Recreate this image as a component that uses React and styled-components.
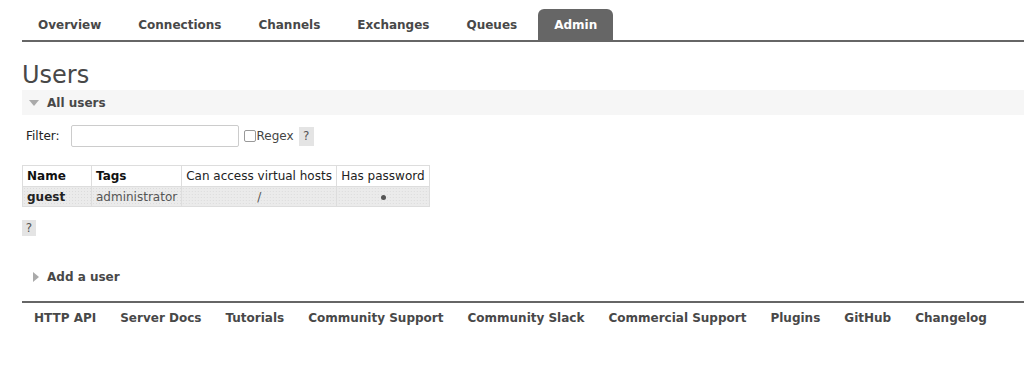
import React from 'react';
import styled, { createGlobalStyle } from 'styled-components';

const GlobalStyle = createGlobalStyle`
  html, body {
    margin: 0;
    padding: 0;
    background: #fff;
  }
  body {
    font-family: "DejaVu Sans", Verdana, sans-serif;
    font-size: 12px;
    color: #484848;
  }
`;

const tabs = ['Overview', 'Connections', 'Channels', 'Exchanges', 'Queues', 'Admin'];
const footerLinks = [
  'HTTP API',
  'Server Docs',
  'Tutorials',
  'Community Support',
  'Community Slack',
  'Commercial Support',
  'Plugins',
  'GitHub',
  'Changelog',
];

function App() {
  return (
    <>
      <GlobalStyle />
      <Page>
        <Tabs>
          {tabs.map(t => (
            <Tab key={t} $active={t === 'Admin'}>
              {t}
            </Tab>
          ))}
        </Tabs>

        <Title>Users</Title>

        <SectionHeader $open>
          <Arrow $open />
          All users
        </SectionHeader>

        <FilterRow>
          <label>Filter:</label>
          <FilterInput type="text" />
          <RegexLabel>
            <CheckBox />
            Regex
          </RegexLabel>
          <Help>?</Help>
        </FilterRow>

        <Table>
          <thead>
            <tr>
              <Th $w={69}>Name</Th>
              <Th $w={90}>Tags</Th>
              <ThPlain $w={155}>Can access virtual hosts</ThPlain>
              <ThPlain $w={93}>Has password</ThPlain>
            </tr>
          </thead>
          <tbody>
            <DataRow>
              <NameCell>guest</NameCell>
              <Td>administrator</Td>
              <Td $center>/</Td>
              <Td $center>
                <Dot />
              </Td>
            </DataRow>
          </tbody>
        </Table>

        <HelpBlock>?</HelpBlock>

        <SectionHeader $collapsed>
          <Arrow />
          Add a user
        </SectionHeader>

        <Footer>
          {footerLinks.map(l => (
            <FooterLink key={l}>{l}</FooterLink>
          ))}
        </Footer>
      </Page>
    </>
  );
}

export default App;

const Page = styled.div`
  padding-left: 22px;
  width: 1002px;
`;

const Tabs = styled.ul`
  display: flex;
  gap: 5px;
  list-style: none;
  margin: 0;
  padding: 9px 0 0;
  border-bottom: 2px solid #666;
  height: 31px;
`;

const Tab = styled.li`
  display: flex;
  align-items: center;
  padding: 0 16px;
  height: 32px;
  font-weight: bold;
  font-size: 12px;
  color: ${p => (p.$active ? '#fff' : '#484848')};
  background: ${p => (p.$active ? '#666' : 'transparent')};
  border-radius: 6px 6px 0 0;
`;

const Title = styled.h1`
  margin: 18px 0 0;
  font-size: 24px;
  font-weight: normal;
  line-height: 30px;
  color: #484848;
`;

const SectionHeader = styled.div`
  display: flex;
  align-items: center;
  height: 25px;
  margin-top: ${p => (p.$collapsed ? '28px' : '0')};
  padding-left: 7px;
  background: ${p => (p.$open ? '#f6f6f6' : 'transparent')};
  font-weight: bold;
  font-size: 12px;
  color: #484848;
`;

const Arrow = styled.span`
  display: inline-block;
  width: 0;
  height: 0;
  margin-right: 8px;
  ${p =>
    p.$open
      ? `
    border-left: 5px solid transparent;
    border-right: 5px solid transparent;
    border-top: 6px solid #aaa;
    margin-left: 0;
  `
      : `
    border-top: 5px solid transparent;
    border-bottom: 5px solid transparent;
    border-left: 6px solid #aaa;
    margin-left: 4px;
    margin-right: 8px;
  `}
`;

const FilterRow = styled.div`
  display: flex;
  align-items: center;
  margin-top: 10px;
  padding-left: 4px;
  font-size: 12px;
  color: #222;
  label {
    margin-right: 11px;
  }
`;

const FilterInput = styled.input`
  box-sizing: border-box;
  width: 168px;
  height: 22px;
  border: 1px solid #ccc;
  border-radius: 2px;
  margin: 0;
  padding: 2px 4px;
`;

const RegexLabel = styled.span`
  display: flex;
  align-items: center;
  margin-left: 5px;
  color: #444;
`;

const CheckBox = styled.span`
  box-sizing: border-box;
  width: 12px;
  height: 12px;
  border: 1px solid #999;
  border-radius: 2px;
  margin-right: 1px;
`;

const Help = styled.span`
  display: inline-flex;
  align-items: center;
  justify-content: center;
  width: 15px;
  height: 19px;
  margin-left: 5px;
  background: #e4e4e4;
  color: #555;
  font-size: 12px;
`;

const Table = styled.table`
  border-collapse: collapse;
  margin-top: 18px;
  font-size: 12px;
`;

const Th = styled.th`
  box-sizing: border-box;
  width: ${p => p.$w}px;
  height: 21px;
  padding: 0 4px;
  border: 1px solid #ddd;
  text-align: left;
  font-weight: bold;
  color: #111;
`;

const ThPlain = styled(Th)`
  font-weight: normal;
  color: #222;
`;

const DataRow = styled.tr`
  background-color: #ebebeb;
  background-image: radial-gradient(#dcdcdc 0.6px, transparent 0.7px);
  background-size: 3px 3px;
`;

const Td = styled.td`
  box-sizing: border-box;
  height: 20px;
  padding: 0 4px;
  border: 1px solid #ddd;
  text-align: ${p => (p.$center ? 'center' : 'left')};
  color: #555;
`;

const NameCell = styled(Td)`
  font-weight: bold;
  color: #222;
`;

const Dot = styled.span`
  display: inline-block;
  width: 5px;
  height: 5px;
  border-radius: 50%;
  background: #555;
  vertical-align: middle;
`;

const HelpBlock = styled(Help)`
  display: flex;
  margin: 13px 0 0;
  height: 16px;
  width: 14px;
`;

const Footer = styled.div`
  display: flex;
  margin-top: 12px;
  border-top: 2px solid #666;
  padding-top: 8px;
`;

const FooterLink = styled.span`
  padding: 0 12px;
  font-weight: bold;
  font-size: 12px;
  color: #484848;
`;
